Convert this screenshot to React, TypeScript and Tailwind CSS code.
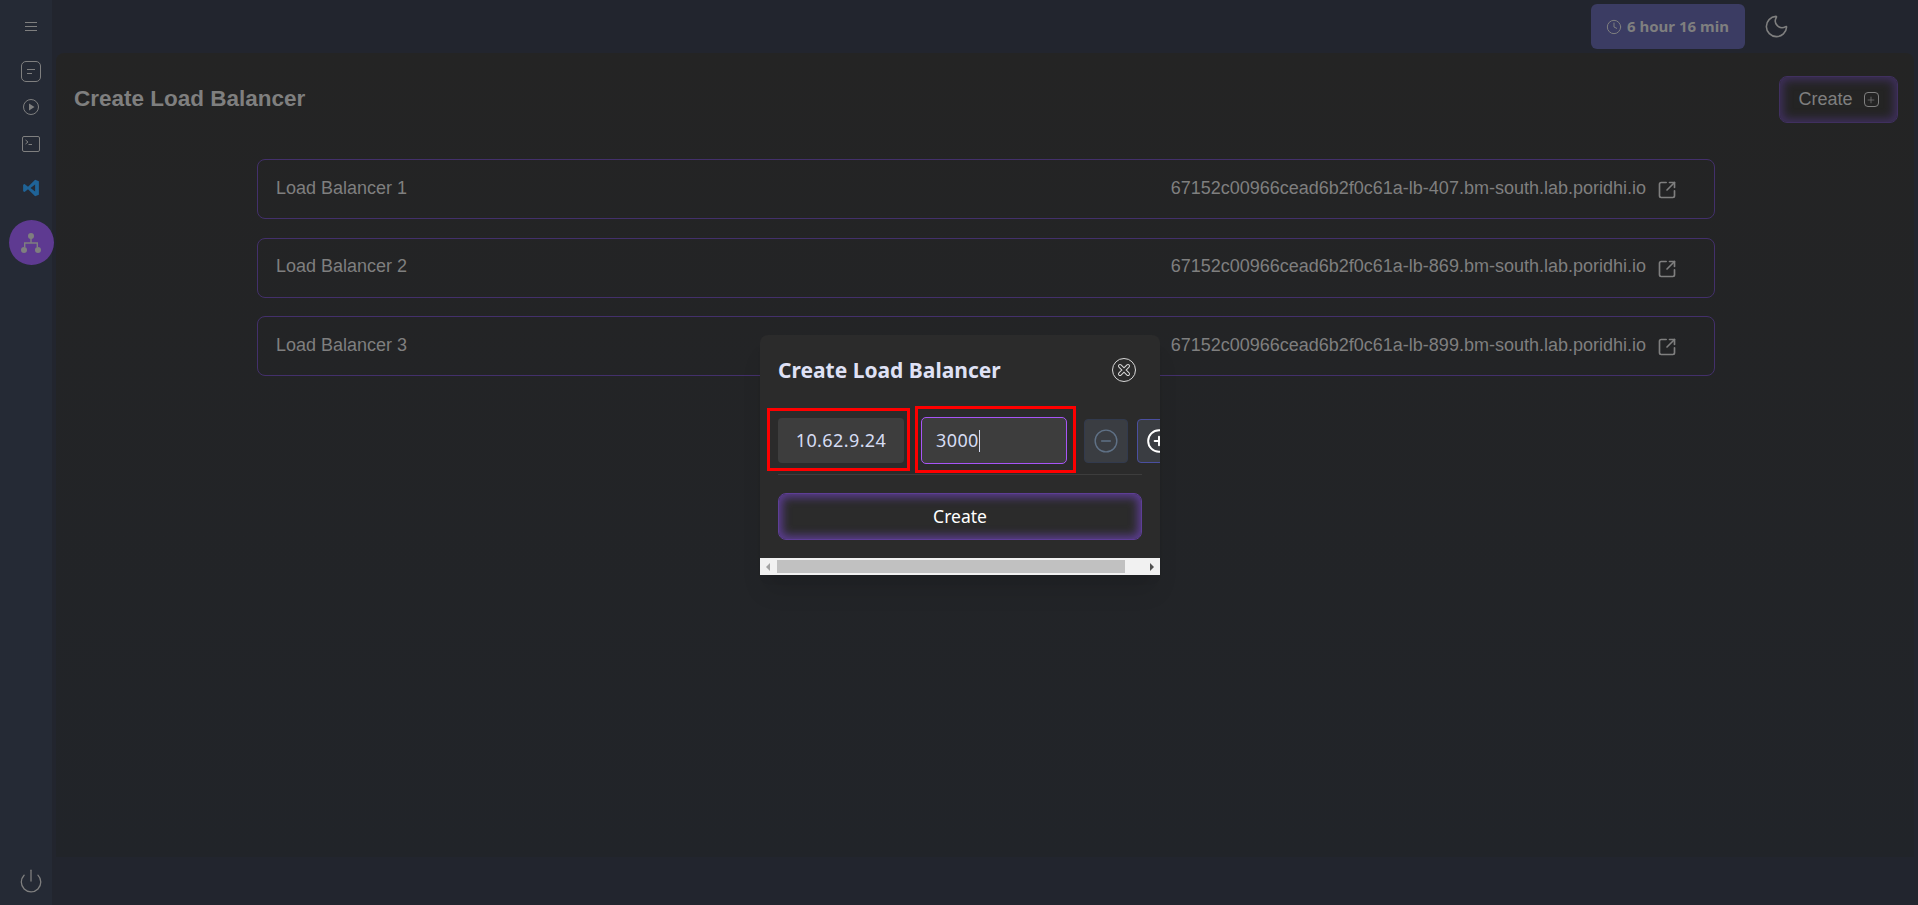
import { Clock, Moon, Power, SquareArrowOutUpRight, CircleMinus, CirclePlus, Plus } from "lucide-react"

const balancers = [
  { name: "Load Balancer 1", host: "67152c00966cead6b2f0c61a-lb-407.bm-south.lab.poridhi.io" },
  { name: "Load Balancer 2", host: "67152c00966cead6b2f0c61a-lb-869.bm-south.lab.poridhi.io" },
  { name: "Load Balancer 3", host: "67152c00966cead6b2f0c61a-lb-899.bm-south.lab.poridhi.io" },
]

function Sidebar() {
  return (
    <aside className="relative z-10 flex h-full w-[52px] shrink-0 flex-col items-center bg-[#252a35] pl-[10px] text-[#7f7f7f]">
      <div className="mt-[22px] flex flex-col gap-[3px]">
        <span className="h-px w-[12px] bg-[#7f7f7f]" />
        <span className="h-px w-[12px] bg-[#7f7f7f]" />
        <span className="h-px w-[12px] bg-[#7f7f7f]" />
      </div>
      <div className="mt-[30px] flex h-[21px] w-[20px] flex-col justify-center gap-[3px] rounded-[5px] border border-[#7f7f7f] pl-[5px]">
        <span className="h-px w-[8px] bg-[#7f7f7f]" />
        <span className="h-px w-[5px] bg-[#7f7f7f]" />
      </div>
      <svg viewBox="0 0 18 18" className="mt-[16px] size-[18px]" fill="none" stroke="currentColor">
        <circle cx="9" cy="9" r="7.5" />
        <path fill="currentColor" stroke="none" d="M7 5.5 12.5 9 7 12.5z" />
      </svg>
      <svg viewBox="0 0 18 16" className="mt-[20px] h-[16px] w-[18px]" fill="none" stroke="currentColor">
        <rect x="0.5" y="0.5" width="17" height="15" rx="1.5" />
        <path d="M3.5 4 6 6 3.5 8M6.5 8.5H10" />
      </svg>
      <svg viewBox="0 0 24 24" className="mt-[27px] size-[18px]">
        <path fill="#1f6397" d="M17.5 1 8 10.2 3.4 6.6 1.5 7.6v8.8l1.9 1 4.6-3.6 9.5 9.2 5-2.1V3.1zm0 6.3v9.4L11.3 12z" />
      </svg>
      <div className="mt-[23px] flex size-[45px] shrink-0 items-center justify-center rounded-full bg-[#5e3a91]">
        <svg viewBox="0 0 24 24" className="size-[24px]" fill="#7f7f7f">
          <circle cx="12" cy="5" r="3" />
          <circle cx="5" cy="19" r="3" />
          <circle cx="19" cy="19" r="3" />
          <path d="M11.3 7h1.4v4.3H19v5h-1.4v-3.6H6.4v3.6H5v-5h6.3z" />
        </svg>
      </div>
      <Power className="mt-auto mb-[11px] size-[26px]" strokeWidth={1.2} />
    </aside>
  )
}

function CreateModal() {
  return (
    <div className="absolute top-[335px] left-[760px] z-20 w-[400px] overflow-hidden rounded-t-[8px] bg-[#2b2b2b] font-['Noto_Sans',sans-serif] shadow-xl">
      <div className="flex h-[223px] flex-col px-[18px]">
        <div className="flex items-center justify-between pt-[23px] pr-[6px]">
          <h2 className="text-[21px] leading-[24px] font-bold text-[#dfe1f5]">Create Load Balancer</h2>
          <span className="flex size-[24px] items-center justify-center rounded-full border border-[#d8d8d8]">
            <svg viewBox="0 0 14 14" className="size-[14px]" fill="none" strokeLinecap="round">
              <path d="M3 3 11 11M11 3 3 11" stroke="#d8d8d8" strokeWidth="4" />
              <path d="M3 3 11 11M11 3 3 11" stroke="#2b2b2b" strokeWidth="2" />
            </svg>
          </span>
        </div>
        <div className="mt-[35px] flex w-[440px] items-center">
          <div className="flex h-[45px] w-[126px] items-center justify-center rounded-[4px] bg-[#3d3d3d] text-[18px] tracking-[0.4px] text-[#d5dcf3]">
            10.62.9.24
          </div>
          <div className="ml-[17px] flex h-[47px] w-[146px] items-center rounded-[5px] border border-[#a855f7] bg-[#3d3d3d] pl-[14px] text-[18px] tracking-[0.4px] text-[#d5dcf3]">
            3000
            <span className="h-[22px] w-px bg-[#d5dcf3]" />
          </div>
          <div className="ml-[17px] flex size-[44px] items-center justify-center rounded-[4px] border border-[#323a4d] bg-[#3a3d42]">
            <CircleMinus className="size-[26px] text-[#5f7186]" strokeWidth={1.3} />
          </div>
          <div className="ml-[9px] flex size-[44px] items-center justify-center rounded-[4px] border border-[#4a4fa0] bg-[#3a3d42]">
            <CirclePlus className="size-[26px] text-white" strokeWidth={1.8} />
          </div>
        </div>
        <div className="mt-[10px] h-px bg-[#3d3d3d]" />
        <button className="mt-[18px] h-[47px] rounded-[8px] border border-[#5e3e96] bg-[#2b2b2b] text-[17.5px] text-white shadow-[inset_0_0_10px_3px_#5e3e96]">
          Create
        </button>
      </div>
      <div className="flex h-[17px] items-center bg-[#f1f1f1] px-[6px]">
        <span className="border-y-[4px] border-r-[4px] border-y-transparent border-r-[#a3a3a3]" />
        <div className="ml-[7px] h-[13px] w-[348px] bg-[#c1c1c1]" />
        <span className="ml-auto border-y-[4px] border-l-[4px] border-y-transparent border-l-[#505050]" />
      </div>
    </div>
  )
}

export default function App() {
  return (
    <div className="relative flex h-[905px] w-[1918px] overflow-hidden bg-[#22252e] font-['Liberation_Sans',Arial,sans-serif]">
      <Sidebar />
      <div className="flex min-w-0 flex-1 flex-col">
        <header className="flex h-[53px] shrink-0 items-center">
          <div className="ml-[1539px] flex h-[45px] w-[154px] items-center gap-[5px] rounded-[6px] bg-[#3b3c63] pl-[15px] font-['Noto_Sans',sans-serif] text-[15px] font-bold text-[#7f7f7f]">
            <Clock className="size-[16px]" strokeWidth={1.5} />
            6 hour 16 min
          </div>
          <Moon className="ml-[18px] size-[27px] text-[#7f7f7f]" strokeWidth={1.4} />
        </header>
        <main className="mx-[4px] mb-[48px] flex-1 rounded-t-[8px] bg-linear-to-b from-[#242424] to-[#212429] pt-[23px]">
          <div className="flex items-start justify-between pr-[16px] pl-[18px]">
            <h1 className="pt-[9px] text-[22.5px] leading-[28px] font-bold text-[#7f7f7f]">Create Load Balancer</h1>
            <button className="flex h-[47px] w-[119px] items-center justify-center gap-[11px] rounded-[8px] border border-[#40305f] bg-[#242424] text-[18px] text-[#7f7f7f] shadow-[inset_0_0_10px_3px_#40305f]">
              Create
              <span className="flex size-[15px] items-center justify-center rounded-[4px] border border-[#7f7f7f]">
                <Plus className="size-[10px]" strokeWidth={1.6} />
              </span>
            </button>
          </div>
          <div className="mt-[36px] ml-[201px] flex w-[1458px] flex-col gap-[18.5px]">
            {balancers.map((lb) => (
              <div key={lb.name} className="flex h-[60px] items-center justify-between rounded-[8px] border border-[#43306b] pr-[37px] pb-[2px] pl-[18px] text-[18px] text-[#7f7f7f]">
                <span>{lb.name}</span>
                <span className="flex items-center gap-[11px]">
                  {lb.host}
                  <SquareArrowOutUpRight className="mt-[4px] size-[20px]" strokeWidth={2} />
                </span>
              </div>
            ))}
          </div>
        </main>
      </div>
      <CreateModal />
      <div className="pointer-events-none absolute top-[408px] left-[767px] z-30 h-[63px] w-[143px] border-[3px] border-[#ff0000]" />
      <div className="pointer-events-none absolute top-[406px] left-[915px] z-30 h-[67px] w-[161px] border-[3px] border-[#ff0000]" />
    </div>
  )
}
